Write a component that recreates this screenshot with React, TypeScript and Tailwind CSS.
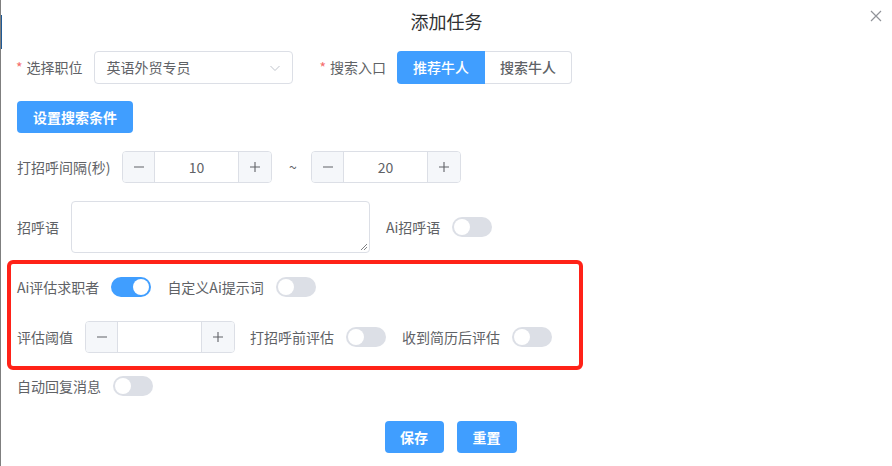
import React, { useState } from "react";

const Switch = ({ on = false }: { on?: boolean }) => (
    <div className={on ? "relative w-[40px] h-[20px] rounded-full bg-[#409eff] shrink-0" : "relative w-[40px] h-[20px] rounded-full bg-[#dcdfe6] shrink-0"}>
        <div className={on ? "absolute top-[2px] left-[22px] w-[16px] h-[16px] rounded-full bg-white" : "absolute top-[2px] left-[2px] w-[16px] h-[16px] rounded-full bg-white"}></div>
    </div>
);

const NumberInput = ({ value }: { value: string }) => (
    <div className="flex w-[150px] h-[32px] border border-[#dcdfe6] rounded-[4px] overflow-hidden shrink-0">
        <div className="w-[32px] h-full bg-[#f5f7fa] border-r border-[#dcdfe6] flex items-center justify-center">
            <svg width="14" height="14" viewBox="0 0 14 14"><path d="M2 7h10" stroke="#606266" strokeWidth="1.1" /></svg>
        </div>
        <div className="flex-1 flex items-center justify-center text-[14px] text-[#606266]">{value}</div>
        <div className="w-[33px] h-full bg-[#f5f7fa] border-l border-[#dcdfe6] flex items-center justify-center">
            <svg width="14" height="14" viewBox="0 0 14 14"><path d="M2 7h10M7 2v10" stroke="#606266" strokeWidth="1.1" /></svg>
        </div>
    </div>
);

const App = () => {
    const [tab] = useState(0);

    return (
        <div className="relative w-[892px] h-[466px] bg-white border-l border-[#7f7f7f] text-[14px] text-[#606266] overflow-hidden" style={{ fontFamily: '"Noto Sans CJK SC", "Noto Sans", sans-serif' }}>
            <div className="absolute left-[-1px] top-[15px] w-[2px] h-[34px] bg-[#1f5a96]"></div>

            <div className="h-[51px] pt-[8px] text-center text-[18px] leading-[26px] text-[#303133]">添加任务</div>
            <div className="absolute right-[10px] top-[10px]">
                <svg width="12" height="12" viewBox="0 0 12 12"><path d="M1 1l10 10M11 1L1 11" stroke="#909399" strokeWidth="1.2" /></svg>
            </div>

            <div className="pl-[15px] flex flex-col">
                {/* row 1 */}
                <div className="flex items-center h-[33px]">
                    <span className="text-[#f56c6c] mr-[4px]">*</span>
                    <span>选择职位</span>
                    <div className="ml-[11px] w-[199px] h-[33px] border border-[#dcdfe6] rounded-[4px] flex items-center justify-between pl-[12px] pr-[10px]">
                        <span className="text-[#606266]">英语外贸专员</span>
                        <svg width="14" height="14" viewBox="0 0 14 14"><path d="M2.5 5l4.5 4.5L11.5 5" fill="none" stroke="#c0c4cc" strokeWidth="1" /></svg>
                    </div>
                    <span className="text-[#f56c6c] ml-[27px] mr-[4px]">*</span>
                    <span>搜索入口</span>
                    <div className="ml-[11px] flex h-[33px]">
                        <div className={tab === 0 ? "w-[88px] flex items-center justify-center bg-[#409eff] text-white font-medium rounded-l-[4px]" : "w-[88px]"}>推荐牛人</div>
                        <div className="w-[87px] flex items-center justify-center border border-l-0 border-[#dcdfe6] rounded-r-[4px] font-medium text-[#606266]">搜索牛人</div>
                    </div>
                </div>

                {/* search condition button */}
                <div className="mt-[17px] pl-[1px]">
                    <button className="w-[116px] h-[32px] bg-[#409eff] text-white font-bold rounded-[4px] text-[14px]">设置搜索条件</button>
                </div>

                {/* interval */}
                <div className="mt-[18px] flex items-center h-[32px] pl-[1px]">
                    <span className="w-[96px] whitespace-nowrap">打招呼间隔(秒)</span>
                    <div className="ml-[9px]"><NumberInput value="10" /></div>
                    <span className="ml-[17px] w-[22px]">~</span>
                    <NumberInput value="20" />
                </div>

                {/* greeting */}
                <div className="mt-[18px] flex items-center h-[52px] pl-[1px]">
                    <span className="w-[42px]">招呼语</span>
                    <div className="ml-[12px] relative w-[299px] h-[52px] border border-[#dcdfe6] rounded-[4px]">
                        <svg className="absolute right-[1px] bottom-[1px]" width="8" height="8" viewBox="0 0 8 8"><path d="M7 1L1 7M7 4L4 7" stroke="#606266" strokeWidth="0.8" /></svg>
                    </div>
                    <span className="ml-[16px]">Ai招呼语</span>
                    <div className="ml-[12px]"><Switch /></div>
                </div>
            </div>

            {/* highlighted box */}
            <div className="ml-[6px] mt-[7px] w-[576px] h-[110px] border-[4px] border-[#ff2218] rounded-[6px] pl-[6px] pt-[7px] flex flex-col">
                <div className="flex items-center h-[32px]">
                    <span>Ai评估求职者</span>
                    <div className="ml-[12px]"><Switch on /></div>
                    <span className="ml-[16px]">自定义Ai提示词</span>
                    <div className="ml-[12px]"><Switch /></div>
                </div>
                <div className="mt-[18px] flex items-center h-[32px]">
                    <span>评估阈值</span>
                    <div className="ml-[12px]"><NumberInput value="" /></div>
                    <span className="ml-[15px]">打招呼前评估</span>
                    <div className="ml-[12px]"><Switch /></div>
                    <span className="ml-[16px]">收到简历后评估</span>
                    <div className="ml-[12px]"><Switch /></div>
                </div>
            </div>

            <div className="pl-[16px] flex items-center h-[32px]">
                <span>自动回复消息</span>
                <div className="ml-[12px]"><Switch /></div>
            </div>

            <div className="mt-[19px] flex justify-center gap-[13px] pl-[8px]">
                <button className="w-[59px] h-[32px] bg-[#409eff] text-white font-bold rounded-[4px] text-[14px]">保存</button>
                <button className="w-[60px] h-[32px] bg-[#409eff] text-white font-bold rounded-[4px] text-[14px]">重置</button>
            </div>
        </div>
    );
};

export default App;
